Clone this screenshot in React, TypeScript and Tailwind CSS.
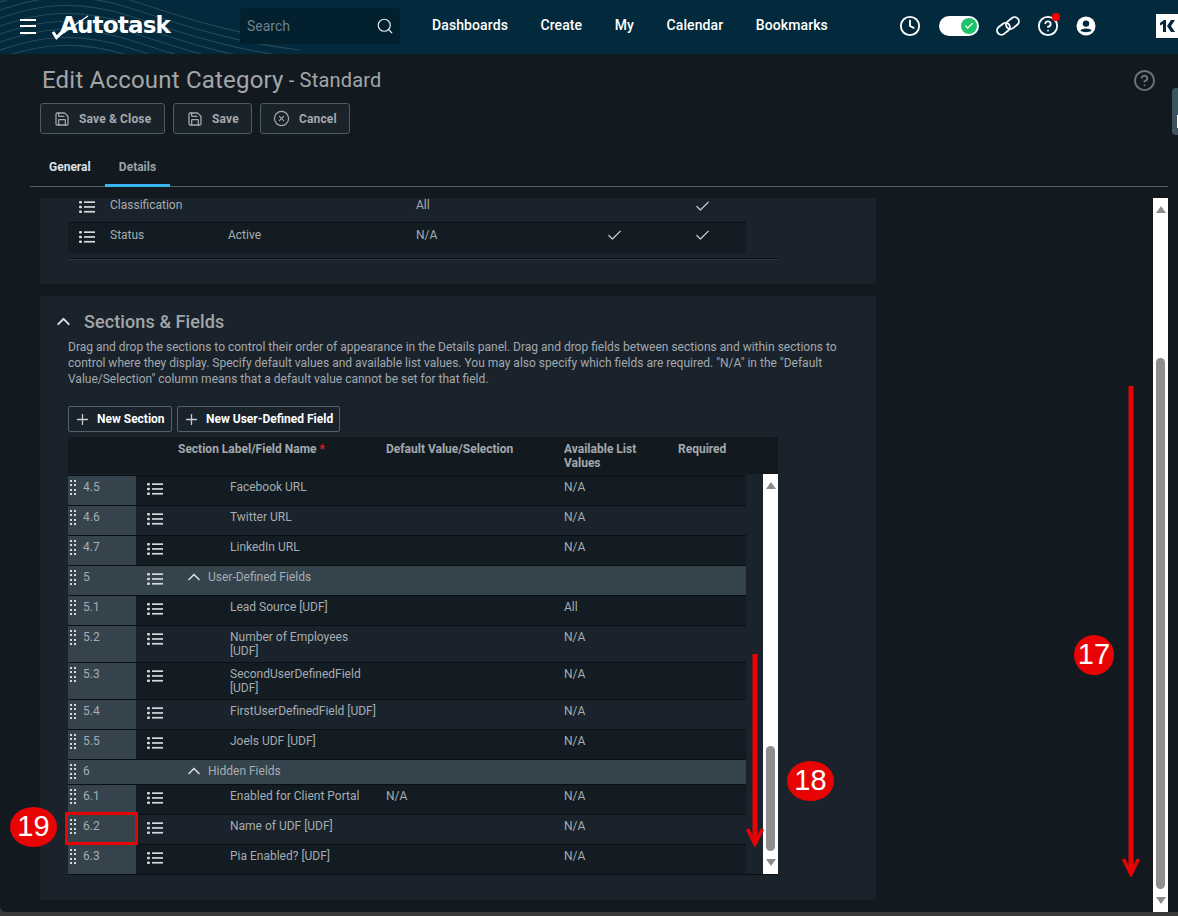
import { Check, ChevronUp, CircleHelp, CircleX, Clock, Plus, Save, Search } from "lucide-react";

type Row = {
  num: string;
  label: string;
  def?: string;
  avail?: string;
  group?: boolean;
  tall?: boolean;
  dark?: boolean;
};

const rows: Row[] = [
  { num: "4.5", label: "Facebook URL", avail: "N/A", dark: true },
  { num: "4.6", label: "Twitter URL", avail: "N/A" },
  { num: "4.7", label: "LinkedIn URL", avail: "N/A", dark: true },
  { num: "5", label: "User-Defined Fields", group: true },
  { num: "5.1", label: "Lead Source [UDF]", avail: "All", dark: true },
  { num: "5.2", label: "Number of Employees [UDF]", avail: "N/A", tall: true },
  { num: "5.3", label: "SecondUserDefinedField [UDF]", avail: "N/A", tall: true, dark: true },
  { num: "5.4", label: "FirstUserDefinedField [UDF]", avail: "N/A" },
  { num: "5.5", label: "Joels UDF [UDF]", avail: "N/A", dark: true },
  { num: "6", label: "Hidden Fields", group: true },
  { num: "6.1", label: "Enabled for Client Portal", def: "N/A", avail: "N/A", dark: true },
  { num: "6.2", label: "Name of UDF [UDF]", avail: "N/A" },
  { num: "6.3", label: "Pia Enabled? [UDF]", avail: "N/A", dark: true },
];

function ListIcon({ className = "" }: { className?: string }) {
  return (
    <svg width="16" height="14" viewBox="0 0 16 14" className={className} fill="currentColor">
      <rect x="0" y="1" width="3" height="2.4" rx="1" />
      <rect x="0" y="5.8" width="3" height="2.4" rx="1" />
      <rect x="0" y="10.6" width="3" height="2.4" rx="1" />
      <rect x="5" y="1.3" width="11" height="1.7" />
      <rect x="5" y="6.1" width="11" height="1.7" />
      <rect x="5" y="10.9" width="11" height="1.7" />
    </svg>
  );
}

function Grip() {
  return (
    <svg width="6" height="15" viewBox="0 0 6 15" fill="#d5d9dc" className="shrink-0">
      {[0, 4, 9, 13].map((y) => (
        <g key={y}>
          <rect x="0" y={y} width="2" height="2" />
          <rect x="4" y={y} width="2" height="2" />
        </g>
      ))}
    </svg>
  );
}

function HeaderWaves() {
  const ys = [-6, 2, 10, 18, 26, 34, 42, 50];
  return (
    <svg width="420" height="54" viewBox="0 0 420 54" className="absolute left-0 top-0" fill="none">
      {ys.map((y) => (
        <path
          key={y}
          d={`M-10 ${y + 12} C 40 ${y - 8}, 80 ${y - 10}, 130 ${y + 6} S 230 ${y + 40}, 300 ${y + 48}`}
          stroke="#5f7480"
          strokeOpacity="0.4"
          strokeWidth="1.2"
        />
      ))}
    </svg>
  );
}

function Logo() {
  return (
    <div className="relative ml-[15px] flex h-[30px] w-[122px] items-center">
      <span className="absolute left-[9px] top-[1px] font-['DejaVu_Sans'] text-[23px] font-bold leading-[26px] tracking-[-0.8px] text-white">
        Autotask
      </span>
      <svg width="40" height="30" viewBox="0 0 40 30" className="absolute left-0 top-0" fill="none">
        <path d="M8 25 L37 5" stroke="#fff" strokeWidth="1.2" />
        <path d="M2 21 L5.5 26.5 L16 16" stroke="#fff" strokeWidth="3" />
      </svg>
    </div>
  );
}

function LinkIcon() {
  return (
    <svg width="24" height="20" viewBox="0 0 24 20" fill="none" stroke="#fff" strokeWidth="1.8">
      <rect x="0.5" y="8.5" width="14" height="8.6" rx="4.3" transform="rotate(-38 7.5 12.8)" />
      <rect x="9.5" y="2.8" width="14" height="8.6" rx="4.3" transform="rotate(-38 16.5 7.1)" />
    </svg>
  );
}

function UserIcon() {
  return (
    <svg width="20" height="20" viewBox="0 0 20 20">
      <circle cx="10" cy="10" r="9.5" fill="#fff" />
      <circle cx="10" cy="7.6" r="3.2" fill="#022a3c" />
      <path d="M4.4 14.8 C5.5 11.8 14.5 11.8 15.6 14.8 C13.5 16.6 6.5 16.6 4.4 14.8 Z" fill="#022a3c" />
    </svg>
  );
}

function TopBar() {
  return (
    <header className="relative flex h-[54px] shrink-0 items-center overflow-hidden bg-[#022a3c] pb-[2px]">
      <HeaderWaves />
      <button className="relative ml-[20px] flex h-[15px] w-[16px] flex-col justify-between">
        <span className="h-[2px] w-[16px] bg-white" />
        <span className="h-[2px] w-[16px] bg-white" />
        <span className="h-[2px] w-[16px] bg-white" />
      </button>
      <Logo />
      <div className="relative ml-[67px] flex h-[36px] w-[160px] items-center justify-between rounded-[2px] bg-[#02202e] pl-[7px] pr-[6px]">
        <span className="text-[14px] text-[#6d818b]">Search</span>
        <Search size={18} strokeWidth={1.6} className="text-[#dfe5e8]" />
      </div>
      <nav className="relative -mt-[1px] ml-[32px] flex gap-[32.5px] text-[14px] font-medium tracking-[0.1px] text-white">
        <span>Dashboards</span>
        <span>Create</span>
        <span>My</span>
        <span>Calendar</span>
        <span>Bookmarks</span>
      </nav>
      <div className="relative ml-[71px] flex items-center">
        <Clock size={22} strokeWidth={2} className="text-white" />
        <div className="ml-[18px] flex h-[20px] w-[40px] items-center justify-end rounded-full bg-white pr-[2px]">
          <span className="flex h-[16px] w-[16px] items-center justify-center rounded-full bg-[#1fc16b]">
            <Check size={10} strokeWidth={3} className="text-white" />
          </span>
        </div>
        <span className="ml-[17px]">
          <LinkIcon />
        </span>
        <span className="relative ml-[17px]">
          <CircleHelp size={22} strokeWidth={2} className="text-white" />
          <span className="absolute right-[-1px] top-[-2px] h-[8px] w-[8px] rounded-full bg-[#f00]" />
        </span>
        <span className="ml-[17px]">
          <UserIcon />
        </span>
      </div>
      <div className="absolute right-0 top-[14px] flex h-[24px] w-[22px] items-center justify-center bg-white">
        <svg width="15" height="12" viewBox="0 0 15 12" fill="#02293a">
          <path d="M0 3 L4 0 H6 V12 H3 V4 L0 5.5 Z" />
          <path d="M7 6 L11 0 H15 L11 6 L15 12 H11 Z" />
        </svg>
      </div>
    </header>
  );
}

function ActionButton({ icon, label, className }: { icon: React.ReactNode; label: string; className: string }) {
  return (
    <button
      className={`flex h-[31px] items-center rounded-[3px] border border-[#4a5c66] bg-[#1a222a] text-[12px] font-bold tracking-[0.15px] text-[#a3a9ae] ${className}`}
    >
      {icon}
      <span>{label}</span>
    </button>
  );
}

function TableButton({ label, className }: { label: string; className: string }) {
  return (
    <button
      className={`flex h-[26px] items-center rounded-[2px] border border-[#4f626d] text-[12px] font-bold text-white ${className}`}
    >
      <Plus size={17} strokeWidth={1.8} className="ml-[5px] mr-[6px] text-[#c8cdd0]" />
      <span>{label}</span>
    </button>
  );
}

function ScrollBar({ className, thumb }: { className: string; thumb: string }) {
  return (
    <div className={`flex shrink-0 flex-col items-center bg-white ${className}`}>
      <span className="mt-[8px] h-0 w-0 border-x-[5px] border-b-[7px] border-x-transparent border-b-[#8c8c8c]" />
      <div className="flex min-h-0 w-[9px] flex-1 flex-col justify-end">
        <div className={`w-[9px] rounded-full bg-[#8e8e8e] ${thumb}`} />
      </div>
      <span className="my-[8px] h-0 w-0 border-x-[5px] border-t-[7px] border-x-transparent border-t-[#8c8c8c]" />
    </div>
  );
}

function FieldRow({ row }: { row: Row }) {
  const bg = row.group ? "bg-[#35434c]" : row.dark ? "bg-[#121c22]" : "bg-[#1a232b]";
  const h = row.tall ? "h-[37px]" : row.num === "6" ? "h-[25px]" : "h-[30px]";
  return (
    <div className={`grid grid-cols-[68px_42px_208px_178px_114px_68px] border-t border-[#0a0f13] text-[12px] leading-[14px] text-[#a6acb1] ${bg} ${h}`}>
      <div className="flex gap-[7px] bg-[#35434c] pl-[2px] pt-[4px]">
        <Grip />
        <span>{row.num}</span>
      </div>
      <div className="pl-[11px] pt-[6px]">
        <ListIcon className={row.num === "6" ? "invisible" : "text-[#d5d9dc]"} />
      </div>
      {row.group ? (
        <div className="flex items-start pl-[6px] pt-[4px]">
          <ChevronUp size={20} strokeWidth={2} className="-mt-[3px] mr-[4px] text-[#d5d9dc]" />
          <span>{row.label}</span>
        </div>
      ) : (
        <div className="w-[200px] pl-[52px] pt-[4px]">{row.label}</div>
      )}
      <div className="pt-[4px]">{row.def}</div>
      <div className="pt-[4px]">{row.avail}</div>
      <div />
    </div>
  );
}

function TopRow({ label, value, avail, first, dark }: { label: string; value?: string; avail: string; first?: boolean; dark?: boolean }) {
  return (
    <div className={`grid grid-cols-[42px_118px_188px_190px_88px_52px] text-[12px] leading-[14px] text-[#a6acb1] ${dark ? "h-[31px] border-t border-[#0a0f13] bg-[#121c22]" : "h-[24px]"}`}>
      <div className={`pl-[11px] ${first ? "pt-[2px]" : "pt-[7px]"}`}>
        <ListIcon className="text-[#d5d9dc]" />
      </div>
      <div className={first ? "" : "pt-[5px]"}>{label}</div>
      <div className={first ? "" : "pt-[5px]"}>{value}</div>
      <div className={first ? "" : "pt-[5px]"}>{avail}</div>
      <div className={first ? "" : "pt-[4px]"}>
        {dark && <Check size={17} strokeWidth={1.7} className="text-[#c3c8cb]" />}
      </div>
      <div className={first ? "" : "pt-[4px]"}>
        <Check size={17} strokeWidth={1.7} className="text-[#c3c8cb]" />
      </div>
    </div>
  );
}

function RedBadge({ n, className }: { n: number; className: string }) {
  return (
    <div className={`absolute flex h-[40px] w-[47px] items-center justify-center rounded-[50%] bg-[#e80404] font-['Liberation_Sans'] text-[29px] text-white ${className}`}>
      {n}
    </div>
  );
}

function RedArrow({ height, className }: { height: number; className: string }) {
  return (
    <svg width="18" height={height} viewBox={`0 0 18 ${height}`} className={`absolute ${className}`} fill="none" stroke="#e80404">
      <path d={`M9 0 V${height - 4}`} strokeWidth="5" />
      <path d={`M1.5 ${height - 18} L9 ${height - 3} L16.5 ${height - 18}`} strokeWidth="3.5" />
    </svg>
  );
}

export default function App() {
  return (
    <div className="relative flex h-[916px] w-[1178px] flex-col overflow-hidden bg-[#3a3a3a] font-['Roboto',sans-serif]">
      <TopBar />
      <main className="mb-[4px] flex min-h-0 flex-1 flex-col rounded-bl-[6px] bg-[#121a20]">
        <div className="flex h-[49px] shrink-0 items-end pb-[7px] pl-[42px] leading-[32px] tracking-[0.2px] text-[#a3a6a9]">
          <span className="text-[24px]">Edit Account Category</span>
          <span className="ml-[5px] text-[20px]">- Standard</span>
        </div>
        <div className="flex shrink-0 gap-[8px] pl-[40px]">
          <ActionButton label="Save & Close" className="w-[125px]" icon={<Save size={16} strokeWidth={1.9} className="ml-[13px] mr-[9px]" />} />
          <ActionButton label="Save" className="w-[79px]" icon={<Save size={16} strokeWidth={1.9} className="ml-[13px] mr-[9px]" />} />
          <ActionButton label="Cancel" className="w-[90px]" icon={<CircleX size={17} strokeWidth={1.7} className="ml-[12px] mr-[9px]" />} />
        </div>
        <div className="mx-[30px] mt-[21px] flex h-[32px] w-[1138px] shrink-0 border-b border-[#4a6070] text-[12px] font-bold">
          <div className="w-[75px] pl-[19px] pt-[3px] text-[#d9e2e6]">General</div>
          <div className="-mb-[1px] flex w-[65px] items-start justify-center border-b-[3px] border-[#38b6f0] pt-[3px] text-[#9aa3a9]">Details</div>
        </div>
        <div className="mt-[11px] flex min-h-0 flex-1 pl-[40px] pr-[10px]">
          <div className="w-[836px] shrink-0">
            <section className="h-[86px] bg-[#1a232b] px-[28px]">
              <div className="w-[678px]">
                <TopRow label="Classification" avail="All" first />
                <TopRow label="Status" value="Active" avail="N/A" dark />
              </div>
              <div className="mt-[5px] h-[2px] w-[710px] border-t border-[#0a0f13] bg-[#2c3740]" />
            </section>
            <section className="mt-[12px] flex h-[604px] flex-col bg-[#1a232b] px-[28px]">
              <div className="mt-[14px] flex h-[22px] items-center">
                <ChevronUp size={21} strokeWidth={2.2} className="-ml-[15px] mr-[10px] text-[#dfe2e4]" />
                <h2 className="text-[18px] font-medium tracking-[0.1px] text-[#a3a6a9]">Sections &amp; Fields</h2>
              </div>
              <p className="mt-[7px] w-[780px] text-[12px] leading-[16px] text-[#a3a9ae]">
                Drag and drop the sections to control their order of appearance in the Details panel. Drag and drop fields between sections and within sections to control where they display. Specify default values and available list values. You may also specify which fields are required. "N/A" in the "Default Value/Selection" column means that a default value cannot be set for that field.
              </p>
              <div className="mt-[19px] flex gap-[5px]">
                <TableButton label="New Section" className="w-[104px]" />
                <TableButton label="New User-Defined Field" className="w-[163px]" />
              </div>
              <div className="mt-[5px] grid h-[37px] w-[710px] grid-cols-[110px_208px_178px_114px_100px] bg-[#121a20] pt-[5px] text-[12px] font-bold leading-[14px] text-[#a3a9ae]">
                <div />
                <div>
                  Section Label/Field Name <span className="text-[#e02020]">*</span>
                </div>
                <div>Default Value/Selection</div>
                <div>
                  Available List
                  <br />
                  Values
                </div>
                <div>Required</div>
              </div>
              <div className="w-[710px] border-b border-[#0a0f13]">
                <div className="flex h-[400px] overflow-hidden">
                  <div className="w-[678px] shrink-0 pt-[1px]">
                    {rows.map((row) => (
                      <FieldRow key={row.num} row={row} />
                    ))}
                  </div>
                  <div className="w-[17px] shrink-0" />
                  <ScrollBar className="w-[15px]" thumb="h-[105px]" />
                </div>
              </div>
            </section>
          </div>
          <div className="flex-1" />
          <ScrollBar className="w-[15px]" thumb="h-[531px]" />
        </div>
      </main>
      <div className="absolute right-0 top-[88px] flex h-[47px] w-[6px] items-end justify-end rounded-l-[4px] bg-[#3d5460] pb-[7px]">
        <span className="h-[13px] w-[1px] bg-white" />
      </div>
      <CircleHelp size={23} strokeWidth={2} className="absolute left-[1133px] top-[69px] text-[#6e7478]" />
      <div className="absolute left-[65px] top-[812px] h-[33px] w-[73px] border-[3px] border-[#e80404]" />
      <RedBadge n={19} className="left-[10px] top-[807px]" />
      <RedBadge n={18} className="left-[787px] top-[761px]" />
      <RedBadge n={17} className="left-[1074px] top-[635px] !w-[40px]" />
      <RedArrow height={193} className="left-[746px] top-[654px]" />
      <RedArrow height={491} className="left-[1122px] top-[386px]" />
    </div>
  );
}
